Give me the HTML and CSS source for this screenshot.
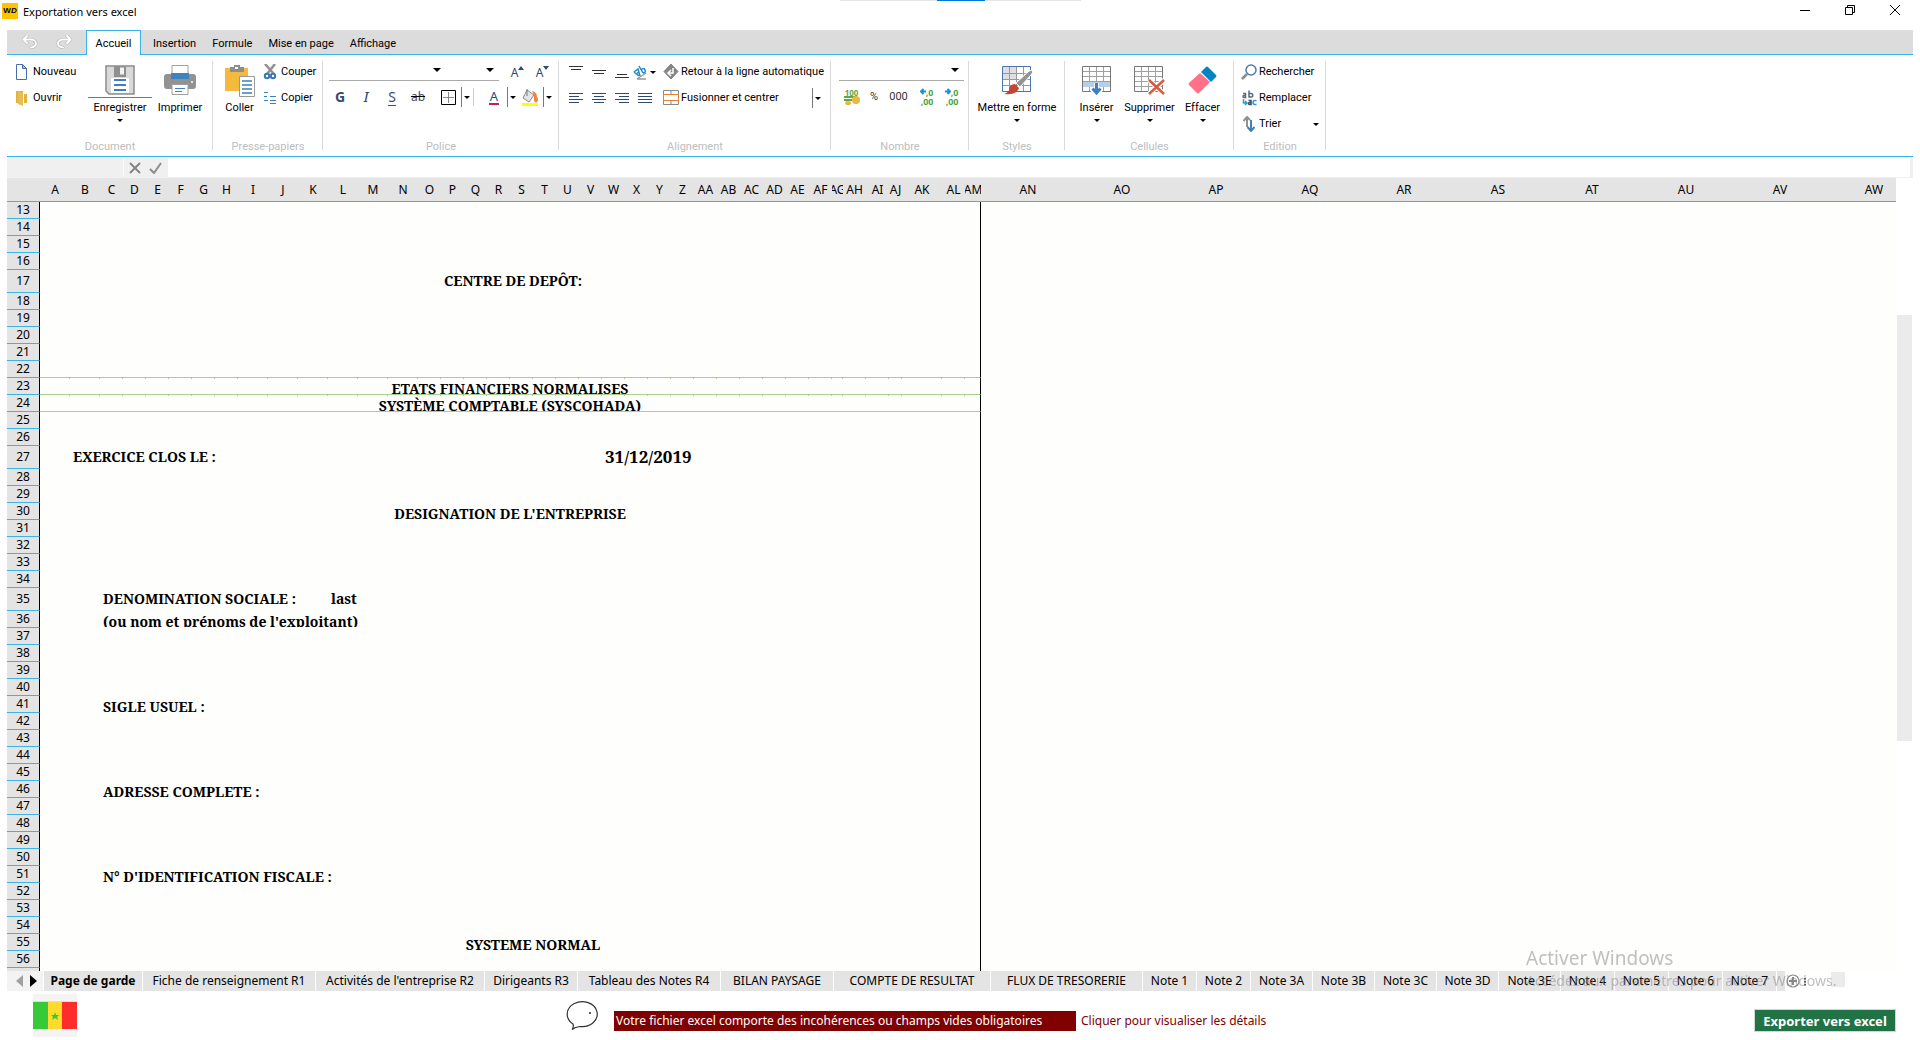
FILE: index.html
```html
<!DOCTYPE html>
<html lang="fr">
<head>
<meta charset="utf-8">
<title>Exportation vers excel</title>
<link rel="stylesheet" href="styles.css">
</head>
<body>
<header class="titlebar">
  <span class="logo"><b>W</b><i>D</i></span>
  <h1>Exportation vers excel</h1>
  <div class="dock"><span></span></div>
  <div class="wincontrols">
    <button aria-label="Réduire"><svg width="10" height="10"><path d="M0 5.500h10" stroke="#000"/></svg></button>
    <button aria-label="Restaurer"><svg width="10" height="10" fill="none" stroke="#000"><path d="M.5 2.500h7v7h-7zM2.500 2.500v-2h7v7h-2"/></svg></button>
    <button aria-label="Fermer"><svg width="10" height="10" stroke="#000"><path d="M0 0l10 10M10 0L0 10"/></svg></button>
  </div>
</header>

<main class="app">
<nav class="menu">
  <div class="history">
    <button aria-label="Annuler"><svg width="16" height="14" fill="none" stroke-linecap="round" stroke-linejoin="round"><path d="M5 1L1.500 4.500 5 8M2 4.500h7a5 4 0 0 1 0 8" stroke="#b0b0b0" stroke-width="3"/><path d="M5 1L1.500 4.500 5 8M2 4.500h7a5 4 0 0 1 0 8" stroke="#fff" stroke-width="2"/></svg></button>
    <button aria-label="Rétablir"><svg width="16" height="14" fill="none" stroke-linecap="round" stroke-linejoin="round"><path d="M11 1l3.500 3.500L11 8M14 4.500H7a5 4 0 0 0 0 8" stroke="#b0b0b0" stroke-width="3"/><path d="M11 1l3.500 3.500L11 8M14 4.500H7a5 4 0 0 0 0 8" stroke="#fff" stroke-width="2"/></svg></button>
  </div>
  <button class="tab active">Accueil</button>
  <button class="tab">Insertion</button>
  <button class="tab">Formule</button>
  <button class="tab">Mise en page</button>
  <button class="tab">Affichage</button>
</nav>

<section class="ribbon">
  <div class="group g-doc">
    <div class="tools">
      <div class="stack">
        <button class="small"><svg width="16" height="16"><path d="M1.500.5h6l4 4v11h-10z" fill="#fff" stroke="#4a6fa8"/><path d="M7.500.5v4h4z" fill="#9ec0e6" stroke="#4a6fa8"/></svg>Nouveau</button>
        <button class="small"><svg width="16" height="16"><path d="M1 1h7v12H1z" fill="#e2b23c"/><path d="M3 1l5 2v13l-5-2z" fill="#e8bd55"/><path d="M9 4h3v9H9z" fill="#e2b23c"/></svg>Ouvrir</button>
      </div>
      <button class="large save"><span class="pic"><svg width="30" height="30"><path d="M1 1h28v28H4l-3-3z" fill="#d9d9d9" stroke="#8c8c8c" stroke-width="1.500"/><path d="M9 1h12v11H9z" fill="#8f8f8f"/><path d="M15 2.500h4v7h-4z" fill="#f2f2f2"/><path d="M6 13h18v15H6z" fill="#fff"/><path d="M9 15h12M9 20h12M9 25h12" stroke="#3f7fbd" stroke-width="2"/></svg></span>Enregistrer<i class="arrow"></i></button>
      <button class="large print"><span class="pic"><svg width="32" height="30"><rect y="9" width="32" height="15" rx="3" fill="#929292"/><path d="M8 .5h16v12H8z" fill="#fff" stroke="#a0a0a0"/><path d="M7 8h18v6H7z" fill="#3f82be"/><path d="M8 19.500h16v10H8z" fill="#fff" stroke="#a0a0a0"/><path d="M11 23.500h10M11 26.500h7" stroke="#3f82be"/><circle cx="28" cy="17" r="1" fill="#fff"/></svg></span>Imprimer</button>
    </div>
    <h2>Document</h2>
  </div>

  <div class="group g-clip">
    <div class="tools">
      <button class="large paste"><span class="pic"><svg width="30" height="32"><path d="M0 3h23v23H0z" fill="#f4ba3e"/><path d="M5 2h4V0h6v2h4v5H5z" fill="#8e8e8e"/><path d="M10 2h3v2h-3z" fill="#fff"/><path d="M14.500 11.500h15v20h-15z" fill="#fff" stroke="#999"/><path d="M17 16h10M17 20h10M17 24h10M17 28h10" stroke="#3f7fbd" stroke-width="1.500"/></svg></span>Coller</button>
      <div class="stack">
        <button class="small"><svg width="16" height="16"><path d="M2 0l9 10M12 0L4 10" stroke="#909090" stroke-width="2.500"/><circle cx="4" cy="12" r="2.200" fill="none" stroke="#3a78b4" stroke-width="2"/><circle cx="10" cy="12" r="2.200" fill="none" stroke="#3a78b4" stroke-width="2"/></svg>Couper</button>
        <button class="small"><svg width="16" height="16" stroke="#3f7fbd"><path d="M1 2.500h4M1 6.500h3M1 10.500h4M7 6.500h6M7 10.500h6M7 13.500h6"/></svg>Copier</button>
      </div>
    </div>
    <h2>Presse-papiers</h2>
  </div>

  <div class="group g-font">
    <div class="tools stack">
      <div class="row">
        <label class="combo name"><select aria-label="Police"><option></option></select><i class="arrow big"></i></label>
        <label class="combo size"><select aria-label="Taille"><option></option></select><i class="arrow big"></i></label>
        <div class="row sizers">
        <button class="icon grow" aria-label="Agrandir"><span>A</span><svg width="6" height="4"><path d="M0 4l3-4 3 4z" fill="#2e4a6e"/></svg></button>
        <button class="icon grow" aria-label="Réduire la police"><span>A</span><svg width="6" height="4"><path d="M0 0l3 4 3-4z" fill="#2e4a6e"/></svg></button>
        </div>
      </div>
      <div class="row styles">
        <button class="icon bold">G</button>
        <button class="icon ital">I</button>
        <button class="icon under">S</button>
        <button class="icon strike">ab</button>
        <div class="split edges"><button class="icon" aria-label="Bordures"><svg width="15" height="15"><path d="M.5.5h14v14H.5z" fill="#fff" stroke="#000"/><path d="M7.500 2v11M2 7.500h11" stroke="#888"/></svg></button><button class="drop" aria-label="Choix de bordure"><i class="arrow"></i></button></div>
        <span class="sep"></span>
        <div class="split"><button class="icon fontcolor"><span>A</span></button><button class="drop" aria-label="Choix de couleur"><i class="arrow"></i></button></div>
        <div class="split"><button class="icon" aria-label="Remplissage"><svg width="16" height="18"><path d="M5 2l7 5-5 7-6-4z" fill="#e4e4e4" stroke="#8a8a8a"/><path d="M5 1v7" stroke="#777"/><path d="M10 3q5 1 5 6a2 3 0 1 1-3 3V7z" fill="#f0843c"/><path d="M0 15h16v3H0z" fill="#ff0"/></svg></button><button class="drop" aria-label="Choix de remplissage"><i class="arrow"></i></button></div>
      </div>
    </div>
    <h2>Police</h2>
  </div>

  <div class="group g-align">
    <div class="tools">
      <div class="stack aligns">
        <div class="row">
          <button class="icon" aria-label="Haut"><svg width="14" height="12" stroke="#333"><path d="M0 .5h14M2 3.500h10"/></svg></button>
          <button class="icon" aria-label="Milieu"><svg width="14" height="12" stroke="#333"><path d="M0 4.500h14M2 7.500h10"/></svg></button>
          <button class="icon" aria-label="Bas"><svg width="14" height="12" stroke="#333"><path d="M2 8.500h10M0 11.500h14"/></svg></button>
          <button class="icon orient" aria-label="Orientation"><svg width="14" height="15" fill="none"><path d="M1 7l4-3 2 7M1 7l5 4M3 9l3-2M6 1l4 7M8 5q3-3 4 0t-2 3" stroke="#2187c4" stroke-width="1.500"/><path d="M4 14L13 8M4 14h9" stroke="#999" stroke-width="1.500"/></svg><i class="arrow"></i></button>
        </div>
        <div class="row">
          <button class="icon" aria-label="Gauche"><svg width="14" height="10" stroke="#2e4a6e"><path d="M0 .5h14M0 3.500h10M0 6.500h14M0 9.500h10"/></svg></button>
          <button class="icon" aria-label="Centre"><svg width="14" height="10" stroke="#2e4a6e"><path d="M0 .5h14M2 3.500h10M0 6.500h14M2 9.500h10"/></svg></button>
          <button class="icon" aria-label="Droite"><svg width="14" height="10" stroke="#2e4a6e"><path d="M0 .5h14M4 3.500h10M0 6.500h14M4 9.500h10"/></svg></button>
          <button class="icon" aria-label="Justifié"><svg width="14" height="10" stroke="#2e4a6e"><path d="M0 .5h14M0 3.500h14M0 6.500h14M0 9.500h14"/></svg></button>
        </div>
      </div>
      <div class="stack">
        <button class="small"><svg width="16" height="16"><path d="M8 0l7 7.500L8 15 1 7.500z" fill="#858585" stroke="#858585"/><path d="M10 4v5H6M8 6L5 9l3 3" stroke="#fff" stroke-width="1.500" fill="none"/></svg>Retour à la ligne automatique</button>
        <div class="row"><button class="small merge"><svg width="16" height="16" fill="#fff"><path d="M.5.5h15v14H.5zM8 .5v4M8 11v4" stroke="#8a8a8a"/><path d="M.5 4.500h15v6H.5z" stroke="#e08030"/></svg>Fusionner et centrer</button><button class="drop" aria-label="Choix de fusion"><i class="arrow"></i></button></div>
      </div>
    </div>
    <h2>Alignement</h2>
  </div>

  <div class="group g-num">
    <div class="tools stack">
      <label class="combo format"><select aria-label="Format"><option></option></select><i class="arrow big"></i></label>
      <div class="row">
        <button class="icon money"><span>100</span><svg width="16" height="9"><path d="M0 1h13M0 4h8" stroke="#5fa644" stroke-width="2"/><circle cx="12" cy="4" r="4" fill="#e8b83f"/><ellipse cx="4" cy="7" rx="3" ry="2" fill="#e8b83f"/></svg></button>
        <button class="icon fmt percent">%</button>
        <button class="icon fmt thousands">000</button>
        <button class="icon dec"><span><svg width="6" height="7"><path d="M6 3.500H1M3.500 1L1 3.500 3.500 6" stroke="#1c94d2" stroke-width="2" fill="none"/></svg>,0</span><span>,00</span></button>
        <button class="icon dec"><span><svg width="6" height="7"><path d="M0 3.500h5M2.500 1L5 3.500 2.500 6" stroke="#1c94d2" stroke-width="2" fill="none"/></svg>,0</span><span>,00</span></button>
      </div>
    </div>
    <h2>Nombre</h2>
  </div>

  <div class="group g-style">
    <div class="tools">
      <button class="large"><span class="pic"><svg width="31" height="30"><path d="M.5 1.500h28v25H.5z" fill="#fff" stroke="#4a74ae"/><path d="M1 2h13v13H1z" fill="#dedede"/><path d="M7.500 2v24M14.500 2v24M21.500 2v24M1 8.500h27M1 14.500h27M1 20.500h27" stroke="#999"/><path d="M30 5q2 2-1 5L18 22l-4-4L27 6z" fill="#949494" stroke="#fff"/><path d="M13 19l4 4q-2 7-15 6 6-2 5-6 2-4 6-4z" fill="#c24536"/></svg></span>Mettre en forme<i class="arrow"></i></button>
    </div>
    <h2>Styles</h2>
  </div>

  <div class="group g-cell">
    <div class="tools">
      <button class="large"><span class="pic"><svg width="30" height="30"><path d="M.5 1.500h28v25H.5z" fill="#fff" stroke="#777"/><path d="M7.500 2v24M14.500 2v24M21.500 2v24M1 6.500h27M1 11.500h27M1 16.500h27M1 21.500h27" stroke="#a0a0a0"/><path d="M1 17h27v5H1z" fill="#b9cde4"/><path d="M14.500 18v10M10 24l4.500 4.500L19 24" stroke="#fff" stroke-width="5" fill="none"/><path d="M14.500 18v10M10.500 23.500l4 4.500 4-4.500" stroke="#3f7fbd" stroke-width="3" fill="none"/></svg></span>Insérer<i class="arrow"></i></button>
      <button class="large"><span class="pic"><svg width="31" height="30"><path d="M.5 1.500h28v25H.5z" fill="#fff" stroke="#777"/><path d="M7.500 2v24M14.500 2v24M21.500 2v24M1 6.500h27M1 11.500h27M1 16.500h27M1 21.500h27" stroke="#a0a0a0"/><path d="M15 15l15 14M30 15L15 29" stroke="#fff" stroke-width="5"/><path d="M15 15l15 14M30 15L15 29" stroke="#da5a3c" stroke-width="2.500"/></svg></span>Supprimer<i class="arrow"></i></button>
      <button class="large"><span class="pic"><svg width="30" height="30"><path d="M12 8L1 18q-1 1 0 2l8 8q1 1 2 0l11-11z" fill="#ff7089"/><path d="M13 7l5-5q1-1 2 0l8 8q1 1 0 2l-5 5z" fill="#0584c2"/></svg></span>Effacer<i class="arrow"></i></button>
    </div>
    <h2>Cellules</h2>
  </div>

  <div class="group g-edit">
    <div class="tools stack">
      <button class="small"><svg width="16" height="16"><circle cx="10" cy="6" r="5" fill="#fff" stroke="#4a7db5" stroke-width="1.500"/><path d="M6 10l-5 5" stroke="#8b8b8b" stroke-width="2.500"/></svg>Rechercher</button>
      <button class="small"><svg width="16" height="16" fill="none" stroke-width="1.500"><path d="M2 3.500h2.500v4H3a1 1 0 0 1 0-2h1.500M8 .5v6.500h2a1 1 0 0 0 0-3.500H8" stroke="#5a6a80"/><path d="M2.500 9v4H5M4 11l2 2-2 2" stroke="#2b9bd8"/><path d="M7.500 10.500H10v4H8.500a1 1 0 0 1 0-2H10" stroke="#3a4a60"/><path d="M15.500 10.500H14a2 2 0 0 0 0 4h1.500" stroke="#2b9bd8"/></svg>Remplacer</button>
      <div class="row"><button class="small sort"><svg width="16" height="16" fill="none" stroke-width="2"><path d="M6 11V1M2.500 5L6 1l3 3" stroke="#909090"/><path d="M10 4v11M6.500 11l3.500 4 3.500-4" stroke="#3f7fbd"/></svg>Trier<i class="arrow"></i></button></div>
    </div>
    <h2>Edition</h2>
  </div>
</section>

<div class="formula">
  <output></output>
  <button aria-label="Annuler la saisie"><svg width="12" height="12" stroke="#858585" stroke-width="2"><path d="M1 1l10 10M11 1L1 11"/></svg></button>
  <button aria-label="Valider la saisie"><svg width="13" height="12" fill="none" stroke="#8c8c8c" stroke-width="2"><path d="M1 7l4 4 7-10"/></svg></button>
  <input type="text" aria-label="Formule">
</div>

<div class="workspace">
<div class="sheet">
<table>
<colgroup><col class="c33"><col class="c30" span="2"><col class="c23" span="6"><col class="c30" span="6"><col class="c23" span="18"><col class="c11"><col class="c23" span="2"><col class="c13"><col class="c40"><col class="c23"><col class="c16"><col class="c94" span="10"></colgroup>
<thead><tr><th></th><th><p>A</p></th><th><p>B</p></th><th><p>C</p></th><th><p>D</p></th><th><p>E</p></th><th><p>F</p></th><th><p>G</p></th><th><p>H</p></th><th><p>I</p></th><th><p>J</p></th><th><p>K</p></th><th><p>L</p></th><th><p>M</p></th><th><p>N</p></th><th><p>O</p></th><th><p>P</p></th><th><p>Q</p></th><th><p>R</p></th><th><p>S</p></th><th><p>T</p></th><th><p>U</p></th><th><p>V</p></th><th><p>W</p></th><th><p>X</p></th><th><p>Y</p></th><th><p>Z</p></th><th><p>AA</p></th><th><p>AB</p></th><th><p>AC</p></th><th><p>AD</p></th><th><p>AE</p></th><th><p>AF</p></th><th><p>AG</p></th><th><p>AH</p></th><th><p>AI</p></th><th><p>AJ</p></th><th><p>AK</p></th><th><p>AL</p></th><th><p>AM</p></th><th><p>AN</p></th><th><p>AO</p></th><th><p>AP</p></th><th><p>AQ</p></th><th><p>AR</p></th><th><p>AS</p></th><th><p>AT</p></th><th><p>AU</p></th><th><p>AV</p></th><th><p>AW</p></th></tr></thead>
<tbody>
<tr><th>13</th><td colspan="39" class="page"></td><td colspan="10"></td></tr>
<tr><th>14</th><td colspan="39" class="page"></td><td colspan="10"></td></tr>
<tr><th>15</th><td colspan="39" class="page"></td><td colspan="10"></td></tr>
<tr><th>16</th><td colspan="39" class="page"></td><td colspan="10"></td></tr>
<tr class="tall"><th>17</th><td colspan="15"></td><td colspan="24" class="page"><p>CENTRE DE DEPÔT:</p></td><td colspan="10"></td></tr>
<tr><th>18</th><td colspan="39" class="page"></td><td colspan="10"></td></tr>
<tr><th>19</th><td colspan="39" class="page"></td><td colspan="10"></td></tr>
<tr><th>20</th><td colspan="39" class="page"></td><td colspan="10"></td></tr>
<tr><th>21</th><td colspan="39" class="page"></td><td colspan="10"></td></tr>
<tr class="green"><th>22</th><td colspan="39" class="page"></td><td colspan="10"></td></tr>
<tr class="green ticked"><th>23</th><td colspan="39" class="page mid"><svg class="ticks" width="940" height="1"><path d="M29 .5h1m29 0h1m22 0h1m22 0h1m22 0h1m22 0h1m22 0h1m22 0h1m29 0h1m29 0h1m29 0h1m29 0h1m29 0h1m29 0h1m22 0h1m22 0h1m22 0h1m22 0h1m22 0h1m22 0h1m22 0h1m22 0h1m22 0h1m22 0h1m22 0h1m22 0h1m22 0h1m22 0h1m22 0h1m22 0h1m22 0h1m22 0h1m10 0h1m22 0h1m22 0h1m12 0h1m39 0h1m22 0h1" stroke="#a9d08e"/></svg><p>ETATS FINANCIERS NORMALISES</p></td><td colspan="10"></td></tr>
<tr class="green ticked"><th>24</th><td colspan="39" class="page mid"><svg class="ticks" width="940" height="1"><path d="M29 .5h1m29 0h1m22 0h1m22 0h1m22 0h1m22 0h1m22 0h1m22 0h1m29 0h1m29 0h1m29 0h1m29 0h1m29 0h1m29 0h1m22 0h1m22 0h1m22 0h1m22 0h1m22 0h1m22 0h1m22 0h1m22 0h1m22 0h1m22 0h1m22 0h1m22 0h1m22 0h1m22 0h1m22 0h1m22 0h1m22 0h1m22 0h1m10 0h1m22 0h1m22 0h1m12 0h1m39 0h1m22 0h1" stroke="#a9d08e"/></svg><p>SYSTÈME COMPTABLE (SYSCOHADA)</p></td><td colspan="10"></td></tr>
<tr><th>25</th><td colspan="39" class="page"></td><td colspan="10"></td></tr>
<tr><th>26</th><td colspan="39" class="page"></td><td colspan="10"></td></tr>
<tr class="tall"><th>27</th><td></td><td colspan="21"><p>EXERCICE CLOS LE :</p></td><td colspan="17" class="page date"><p>31/12/2019</p></td><td colspan="10"></td></tr>
<tr><th>28</th><td colspan="39" class="page"></td><td colspan="10"></td></tr>
<tr><th>29</th><td colspan="39" class="page"></td><td colspan="10"></td></tr>
<tr><th>30</th><td colspan="39" class="page mid"><p>DESIGNATION DE L'ENTREPRISE</p></td><td colspan="10"></td></tr>
<tr><th>31</th><td colspan="39" class="page"></td><td colspan="10"></td></tr>
<tr><th>32</th><td colspan="39" class="page"></td><td colspan="10"></td></tr>
<tr><th>33</th><td colspan="39" class="page"></td><td colspan="10"></td></tr>
<tr><th>34</th><td colspan="39" class="page"></td><td colspan="10"></td></tr>
<tr class="tall"><th>35</th><td colspan="2"></td><td colspan="9"><p>DENOMINATION SOCIALE :</p></td><td colspan="28" class="page"><p>last</p></td><td colspan="10"></td></tr>
<tr><th>36</th><td colspan="2"></td><td colspan="37" class="page"><p>(ou nom et prénoms de l'exploitant)</p></td><td colspan="10"></td></tr>
<tr><th>37</th><td colspan="39" class="page"></td><td colspan="10"></td></tr>
<tr><th>38</th><td colspan="39" class="page"></td><td colspan="10"></td></tr>
<tr><th>39</th><td colspan="39" class="page"></td><td colspan="10"></td></tr>
<tr><th>40</th><td colspan="39" class="page"></td><td colspan="10"></td></tr>
<tr><th>41</th><td colspan="2"></td><td colspan="37" class="page"><p>SIGLE USUEL :</p></td><td colspan="10"></td></tr>
<tr><th>42</th><td colspan="39" class="page"></td><td colspan="10"></td></tr>
<tr><th>43</th><td colspan="39" class="page"></td><td colspan="10"></td></tr>
<tr><th>44</th><td colspan="39" class="page"></td><td colspan="10"></td></tr>
<tr><th>45</th><td colspan="39" class="page"></td><td colspan="10"></td></tr>
<tr><th>46</th><td colspan="2"></td><td colspan="37" class="page"><p>ADRESSE COMPLETE :</p></td><td colspan="10"></td></tr>
<tr><th>47</th><td colspan="39" class="page"></td><td colspan="10"></td></tr>
<tr><th>48</th><td colspan="39" class="page"></td><td colspan="10"></td></tr>
<tr><th>49</th><td colspan="39" class="page"></td><td colspan="10"></td></tr>
<tr><th>50</th><td colspan="39" class="page"></td><td colspan="10"></td></tr>
<tr><th>51</th><td colspan="2"></td><td colspan="37" class="page"><p>N° D'IDENTIFICATION FISCALE :</p></td><td colspan="10"></td></tr>
<tr><th>52</th><td colspan="39" class="page"></td><td colspan="10"></td></tr>
<tr><th>53</th><td colspan="39" class="page"></td><td colspan="10"></td></tr>
<tr><th>54</th><td colspan="39" class="page"></td><td colspan="10"></td></tr>
<tr><th>55</th><td colspan="15"></td><td colspan="8" class="mid"><p>SYSTEME NORMAL</p></td><td colspan="16" class="page"></td><td colspan="10"></td></tr>
<tr><th>56</th><td colspan="39" class="page"></td><td colspan="10"></td></tr>
<tr><th></th><td colspan="39" class="page"></td><td colspan="10"></td></tr>
</tbody>
</table>
</div>
<div class="scroll"><span></span></div>
</div>

<nav class="sheets">
  <div class="arrows">
    <button aria-label="Feuille précédente"><svg width="7" height="12"><path d="M7 0v12L0 6z" fill="#a0a0a0"/></svg></button>
    <button aria-label="Feuille suivante"><svg width="7" height="12"><path d="M0 0v12l7-6z"/></svg></button>
  </div>
  <button class="s98 current">Page de garde</button>
  <button class="s172">Fiche de renseignement R1</button>
  <button class="s168">Activités de l'entreprise R2</button>
  <button class="s92">Dirigeants R3</button>
  <button class="s142">Tableau des Notes R4</button>
  <button class="s112">BILAN PAYSAGE</button>
  <button class="s156">COMPTE DE RESULTAT</button>
  <button class="s151">FLUX DE TRESORERIE</button>
  <button class="s53">Note 1</button>
  <button class="s53">Note 2</button>
  <button class="s61">Note 3A</button>
  <button class="s61">Note 3B</button>
  <button class="s61">Note 3C</button>
  <button class="s61">Note 3D</button>
  <button class="s61">Note 3E</button>
  <button class="s53">Note 4</button>
  <button class="s53">Note 5</button>
  <button class="s53">Note 6</button>
  <button class="s53">Note 7</button>
  <button class="stub" aria-label="Note suivante"></button>
  <button class="add" aria-label="Ajouter une feuille"><svg width="22" height="14" fill="none"><circle cx="7" cy="7" r="6" stroke="#888" stroke-width="1.200"/><path d="M7 3v8M3 7h8" stroke="#888" stroke-width="2"/><path d="M19 4v1.500M19 7v1.500M19 10v1.500" stroke="#111" stroke-width="1.500"/></svg></button>
  <span class="hthumb"></span>
</nav>

<footer class="status">
  <svg class="flag" width="44" height="43"><path d="M0 0h44v43H0z" fill="#f4f4f4"/><path d="M0 7h44v1H0z" fill="#ddd"/><path d="M0 8h15v27H0z" fill="#37c937"/><path d="M15 8h14v27H15z" fill="#ffdb2c"/><path d="M29 8h15v27H29z" fill="#ff2c2c"/><path d="M22 18l1 3h3l-2 2 1 3-3-2-3 2 1-3-2-2h3z" fill="#37c937"/></svg>
  <svg class="bubble" width="33" height="31"><path d="M7 24A15 12.500 0 1 1 14 26.500Q9 27 6 29.500 8 27 7 24z" fill="#fff" stroke="#333" stroke-width="1.200"/><circle cx="24" cy="13" r="1" fill="#222"/></svg>
  <p class="alert">Votre fichier excel comporte des incohérences ou champs vides obligatoires</p>
  <a href="#details">Cliquer pour visualiser les détails</a>
  <button class="export">Exporter vers excel</button>
</footer>
</main>

<aside class="watermark"><strong>Activer Windows</strong><span>Accédez aux paramètres pour activer Windows.</span></aside>
</body>
</html>
```
FILE: styles.css
```css
* { box-sizing: border-box; }
body { margin: 0; height: 100vh; display: flex; flex-direction: column; background: #fff; color: #000; font: 12px/16px "Noto Sans", sans-serif; overflow: hidden; }
h1, h2, p { margin: 0; font-weight: normal; }
button { border: 0; padding: 0; background: none; font: inherit; color: inherit; white-space: nowrap; }
svg { display: block; flex: none; }
.row, .tools { display: flex; }
.stack { display: flex; flex-direction: column; }

.titlebar { height: 30px; flex: none; display: flex; align-items: flex-start; padding: 3px 20px 0 2px; gap: 5px; }
.logo { width: 16px; height: 16px; background: #ffc400; font: bold 8px/16px "Liberation Sans", sans-serif; text-align: center; overflow: hidden; }
.titlebar h1 { font-size: 11px; line-height: 17px; }
.dock { position: absolute; top: 0; left: 840px; width: 241px; height: 1px; background: #e5e5e5; }
.dock span { display: block; width: 48px; height: 1px; margin: 0 auto; background: #0078d7; }
.wincontrols { margin-left: auto; display: flex; gap: 35px; padding-top: 2px; }

.app { flex: 1; min-height: 0; padding: 0 7px; display: flex; flex-direction: column; }
.menu { height: 25px; flex: none; display: flex; align-items: stretch; background: #dcdcdc; border-bottom: 1px solid #3cb4e7; font: 11px/24px Roboto, sans-serif; }
.history { display: flex; width: 79px; padding-left: 15px; gap: 18px; }
.tab { padding: 2px 8px 0; margin: 0; }
.tab.active { width: 55px; margin: 0 4px 0 0; padding: 1px 0 0; background: #fff; border: 1px solid #3cb4e7; border-bottom: 0; height: 25px; }

.ribbon { height: 102px; flex: none; display: flex; border-bottom: 1px solid #3cb4e7; font: 11px/16px Roboto, sans-serif; }
.group { position: relative; display: flex; flex-direction: column; padding-top: 4px; }
.group::after { content: ""; position: absolute; right: 0; top: 6px; bottom: 6px; width: 1px; background: #d9d9d9; }
.group h2 { font-size: 11px; line-height: 20px; text-align: center; color: #bdbdbd; }
.tools { height: 78px; flex: none; }
.g-doc { width: 206px; } .g-clip { width: 110px; } .g-font { width: 236px; } .g-align { width: 272px; }
.g-num { width: 138px; } .g-style { width: 96px; } .g-cell { width: 169px; } .g-edit { width: 92px; }
.g-doc .tools { padding-left: 8px; }
.g-doc .stack { width: 73px; }
.g-clip .tools { padding-left: 3px; }
.g-cell .tools { padding-left: 5px; }
.g-edit .tools { padding-left: 7px; }
.g-num .tools { padding-left: 8px; }
.g-align .tools { padding-left: 5px; }
.small { height: 26px; display: flex; align-items: center; gap: 2px; }
.large { display: flex; flex-direction: column; align-items: center; padding-top: 6px; width: 53px; }
.large .pic { height: 33px; width: 100%; display: flex; justify-content: center; margin-bottom: 2px; border-bottom: 1px solid transparent; }
.large.save { width: 64px; }
.large.save .pic { border-color: #777; }
.large.print { width: 56px; }
.large.paste { width: 47px; }
.g-style .large { width: 96px; }
.arrow { width: 0; height: 0; border: 3px solid transparent; border-top: 3px solid #000; border-bottom: 0; }
.large .arrow { margin-top: 3px; }
.arrow.big { border-width: 4px 4px 0; }

.combo { height: 22px; border-bottom: 1px solid #aaa; display: flex; align-items: center; padding-right: 5px; }
.combo select { appearance: none; border: 0; background: none; flex: 1; min-width: 0; height: 20px; padding: 0; }
.combo.name { width: 117px; } .combo.size { width: 53px; } .combo.format { width: 125px; }
.g-font .row:first-child { height: 25px; }
.g-font .combo.name { margin-left: 6px; }
.sizers { padding-left: 6px; }
.g-num .combo { margin-bottom: 3px; }
.icon { width: 25px; height: 26px; display: flex; align-items: center; justify-content: center; }
.aligns { width: 99px; }
.aligns .icon { width: 23px; }
.aligns .orient { gap: 3px; }
.styles { padding-left: 4px; }
.styles .icon { width: 26px; }
.grow { color: #2e4a6e; align-items: flex-start; padding-top: 5px; font: 12px/18px "Noto Sans", sans-serif; }
.grow svg { margin-top: 2px; }
.bold, .ital, .under, .strike { color: #3a4a70; font: 14px/16px "Noto Sans", sans-serif; }
.bold { font-weight: bold; }
.ital { font-family: "Noto Serif", "Liberation Serif", serif; font-style: italic; }
.under { text-decoration: underline; text-underline-offset: 3px; }
.strike { font-size: 12px; text-decoration: line-through #000; }
.split { display: flex; }
.split.edges { padding-left: 4px; }
.drop { width: 10px; height: 20px; margin-top: 3px; border-left: 1px solid #777; display: flex; align-items: center; justify-content: center; }
.sep { width: 1px; height: 18px; margin: 4px 7px 0 2px; background: #ccc; }
.fontcolor span { color: #2e4a6e; font: 13px/12px "Noto Sans", sans-serif; padding: 0 1px 1px; border-bottom: 2px solid #c02060; }
.merge { width: 149px; }
.money { flex-direction: column; }
.money span { font: bold 8px/7px "Noto Sans", sans-serif; color: #5fa644; }
.fmt { font-size: 11px; color: #333; }
.icon.percent { width: 20px; }
.icon.thousands { width: 29px; }
.dec { flex-direction: column; align-items: center; }
.dec span { display: flex; justify-content: flex-end; width: 16px; font: bold 9px/9px "Noto Sans", sans-serif; color: #4fa63f; }
.sort { width: 78px; }
.sort .arrow { margin-left: auto; }

.formula { height: 21px; flex: none; display: flex; background: #f0f0f0; padding: 1px 3px 1px 0; }
.formula output { width: 117px; border-right: 1px solid #fafafa; }
.formula button { width: 21px; display: grid; place-items: center; }
.formula input { flex: 1; border: 0; padding: 0 4px; background: #fff; margin-left: 2px; }

.workspace { flex: 1; min-height: 0; display: flex; }
.sheet { flex: 1; min-width: 0; overflow: hidden; background: #fefefd; }
table { table-layout: fixed; border-collapse: separate; border-spacing: 0; width: 1914px; }
.c11 { width: 11px; } .c13 { width: 13px; } .c16 { width: 16px; } .c23 { width: 23px; }
.c30 { width: 30px; } .c33 { width: 33px; } .c40 { width: 40px; } .c94 { width: 94px; }
th { background: #e4e4e4; border-bottom: 1px solid #3cb4e7; font-weight: normal; padding: 0; }
thead th { height: 24px; }
thead p { display: flex; justify-content: center; overflow: hidden; }
tbody th { height: 17px; line-height: 16px; border-right: 1px solid #000; }
td { height: 17px; padding: 0 0 0 3px; vertical-align: top; }
td p { height: 16px; overflow: hidden; white-space: nowrap; font: bold 14px/22px "Noto Serif", "DejaVu Serif Condensed", serif; }
.date p { font-size: 17px; }
.tall th, .tall td { height: 23px; }
.tall p { height: 22px; }
.page { border-right: 1px solid #000; }
.mid { padding: 0; text-align: center; }
.green .page { border-bottom: 1px solid #a9d08e; position: relative; }
.ticks { position: absolute; left: 0; top: 0; }
tbody tr:last-child th, tbody tr:last-child td { height: 3px; border-bottom: 0; }
.scroll { width: 17px; flex: none; padding: 137px 1px 0; }
.scroll span { display: block; height: 65%; max-height: 428px; background: #ebebeb; }

.sheets { height: 20px; flex: none; display: flex; gap: 1px; line-height: 20px; }
.sheets > button { background: #e4e4e4; flex: none; }
.arrows { width: 36px; display: flex; justify-content: space-evenly; padding-left: 3px; background: #f3f3f3; }
.sheets .current { font-weight: bold; }
.s53 { width: 53px; } .s61 { width: 61px; } .s92 { width: 92px; } .s98 { width: 98px; } .s112 { width: 112px; }
.s142 { width: 142px; } .s151 { width: 151px; } .s156 { width: 156px; } .s168 { width: 168px; } .s172 { width: 172px; }
.sheets .stub { width: 8px; }
.sheets .add { background: none; }
.hthumb { width: 14px; height: 15px; margin: 1px 0 0 22px; background: #ebebeb; }

.status { height: 49px; flex: none; display: flex; align-items: center; padding: 0 17px 0 26px; }
.bubble { margin-left: 489px; }
.alert { width: 462px; height: 20px; margin: 10px 5px 0 15px; padding-left: 2px; line-height: 20px; background: #800000; color: #fff; white-space: nowrap; }
.status a { margin-top: 10px; line-height: 20px; color: #800000; text-decoration: none; }
.export { margin: 10px 0 0 auto; width: 142px; height: 23px; background: #217346; border: 1px solid #d0d8d3; color: #fff; font-weight: bold; font-size: 13px; }

.watermark { position: fixed; right: 80px; bottom: 48px; width: 314px; color: rgba(130, 130, 130, 0.5); pointer-events: none; white-space: nowrap; }
.watermark strong { display: block; font-weight: normal; font-size: 19px; line-height: 24px; }
.watermark span { display: block; font-size: 14px; line-height: 22px; }
```
